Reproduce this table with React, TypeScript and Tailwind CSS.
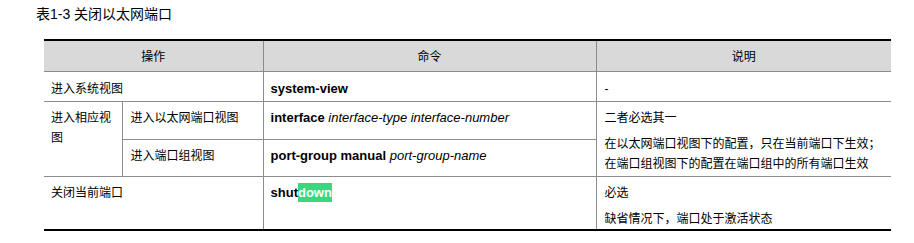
const cell = "border-[#8c8c8c] px-[7px] text-left";

const Line = ({ children, last }: { children: React.ReactNode; last?: boolean }) => (
  <p className={last ? "leading-5" : "leading-5 mb-[6px]"}>{children}</p>
);

const App = () => {
  return (
    <div className="w-[914px] h-[243px] bg-white text-black text-[12px] font-['Liberation_Sans','Noto_Sans_CJK_SC',sans-serif]">
      <div className="pl-[36px] pt-[4px] text-[14px] leading-5">表1-3 关闭以太网端口</div>
      <div className="pl-[44px] pt-[15px]">
        <table className="table-fixed border-collapse w-[847px]">
          <colgroup>
            <col className="w-[78px]" />
            <col className="w-[141px]" />
            <col className="w-[333px]" />
            <col className="w-[295px]" />
          </colgroup>
          <thead>
            <tr className="h-[31px] bg-[#d9d9d9] border-t-2 border-t-black">
              <th colSpan={2} className={`${cell} border-b font-normal align-middle pt-[2px]`} style={{ textAlign: "center" }}>
                操作
              </th>
              <th className={`${cell} border-b border-l font-normal align-middle pt-[2px]`} style={{ textAlign: "center" }}>
                命令
              </th>
              <th className={`${cell} border-b border-l font-normal align-middle pt-[2px]`} style={{ textAlign: "center" }}>
                说明
              </th>
            </tr>
          </thead>
          <tbody>
            <tr className="h-[30px]">
              <td colSpan={2} className={`${cell} align-top border-b pt-[7px]`}>
                <Line last>进入系统视图</Line>
              </td>
              <td className={`${cell} align-top border-b border-l pt-[7px] font-bold text-[13px]`}>
                <Line last>system-view</Line>
              </td>
              <td className={`${cell} align-top border-b border-l pt-[7px] pl-[8px]`}>
                <Line last>-</Line>
              </td>
            </tr>
            <tr className="h-[38px]">
              <td rowSpan={2} className={`${cell} align-top border-b pt-[6px]`}>
                <p className="leading-5">进入相应视图</p>
              </td>
              <td className={`${cell} align-top border-b border-l pt-[6px] pl-[8px]`}>
                <Line last>进入以太网端口视图</Line>
              </td>
              <td className={`${cell} align-top border-b border-l pt-[6px] text-[13px]`}>
                <Line last>
                  <b>interface</b> <i>interface-type interface-number</i>
                </Line>
              </td>
              <td rowSpan={2} className={`${cell} align-top border-b border-l pt-[6px] pl-[8px]`}>
                <Line>二者必选其一</Line>
                <p className="leading-5">
                  在以太网端口视图下的配置，只在当前端口下生效；
                  <br />
                  在端口组视图下的配置在端口组中的所有端口生效
                </p>
              </td>
            </tr>
            <tr className="h-[37px]">
              <td className={`${cell} align-top border-b border-l pt-[6px] pl-[8px]`}>
                <Line last>进入端口组视图</Line>
              </td>
              <td className={`${cell} align-top border-b border-l pt-[6px] text-[13px]`}>
                <Line last>
                  <b>port-group manual</b> <i>port-group-name</i>
                </Line>
              </td>
            </tr>
            <tr className="h-[54px] border-b-2 border-b-black">
              <td colSpan={2} className={`${cell} align-top pt-[6px]`}>
                <Line last>关闭当前端口</Line>
              </td>
              <td className={`${cell} align-top border-l pt-[6px] text-[13px]`}>
                <Line last>
                  <b>
                    shut<span className="bg-[#3bd67f] text-white py-[2px]">down</span>
                  </b>
                </Line>
              </td>
              <td className={`${cell} align-top border-l pt-[6px] pl-[8px]`}>
                <Line>必选</Line>
                <Line last>缺省情况下，端口处于激活状态</Line>
              </td>
            </tr>
          </tbody>
        </table>
      </div>
    </div>
  );
};

export default App;
